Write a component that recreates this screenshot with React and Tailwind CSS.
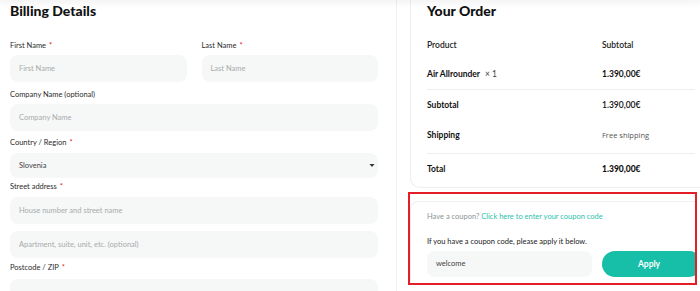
import { useState } from "react";

const Label = ({ children, required, className = "" }) => (
    <p className={`text-[7.5px] leading-[12px] text-[#2b2b2b] ${className}`}>
        {children}
        {required && <span className="text-[#e0261b] ml-[3px]">*</span>}
    </p>
)

const Field = ({ placeholder, value, className = "" }) => (
    <div className={`h-[27px] rounded-[8px] bg-[#f6f7f7] flex items-center px-[9px] text-[7.5px] ${value ? 'text-[#333]' : 'text-[#a8acac]'} ${className}`}>
        {value || placeholder}
    </div>
)

const orderRows = [
    { label: "Subtotal", value: "1.390,00€" },
]

const App = () => {
    const [coupon] = useState("welcome")

    return (
        <div className="w-[700px] h-[291px] overflow-hidden bg-white font-['Lato',sans-serif]">
            {/* header shadow from the sticky nav above */}
            <div className="h-0 relative z-10 shadow-[0_0_7px_2px_rgba(0,0,0,0.09)]" />

            <div className="flex">
                {/* Billing */}
                <div className="w-[397px] shrink-0 border-r border-[#f0f0f0] pl-[10px] pr-[18px] h-[300px]">
                    <h2 className="text-[14px] leading-[20px] font-black text-[#111] pt-[1px]">Billing Details</h2>

                    <div className="flex gap-[15px] mt-[19px]">
                        <div className="flex-1">
                            <Label required>First Name</Label>
                            <Field placeholder="First Name" className="mt-[3px]" />
                        </div>
                        <div className="flex-1">
                            <Label required>Last Name</Label>
                            <Field placeholder="Last Name" className="mt-[3px]" />
                        </div>
                    </div>

                    <Label className="mt-[7px]">Company Name (optional)</Label>
                    <Field placeholder="Company Name" className="mt-[3px]" />

                    <Label required className="mt-[6px]">Country / Region</Label>
                    <div className="mt-[4px] h-[25px] rounded-[8px] bg-[#f6f7f7] flex items-center justify-between pl-[9px] pr-[2px] text-[7.5px] text-[#444]">
                        <span>Slovenia</span>
                        <svg width="8" height="5" viewBox="0 0 8 5"><path d="M1.5 1h5L4 4z" fill="#333" /></svg>
                    </div>

                    <Label required className="mt-[3px]">Street address</Label>
                    <Field placeholder="House number and street name" className="mt-[4px]" />
                    <Field placeholder="Apartment, suite, unit, etc. (optional)" className="mt-[7px]" />

                    <Label required className="mt-[4px]">Postcode / ZIP</Label>
                    <Field placeholder="" className="mt-[5px]" />
                </div>

                {/* Order */}
                <div className="flex-1">
                    <div className="ml-[13px] w-[290px] border-l border-b border-[#eeeeee] rounded-bl-[10px] pl-[16px] pr-[5px] pt-[1px] pb-[2px]">
                        <h2 className="text-[14px] leading-[20px] font-black text-[#111]">Your Order</h2>

                        <div className="grid grid-cols-[175px_1fr] h-[30px] items-center mt-[9px] text-[8.5px] font-semibold text-[#222]">
                            <span>Product</span>
                            <span>Subtotal</span>
                        </div>
                        <div className="grid grid-cols-[175px_1fr] h-[30px] items-center border-b border-[#eeeeee] text-[8.5px] font-bold text-[#111]">
                            <span>Air Allrounder <span className="font-normal text-[#444] ml-[3px]">× 1</span></span>
                            <span>1.390,00€</span>
                        </div>
                        {orderRows.map(row => (
                            <div key={row.label} className="grid grid-cols-[175px_1fr] h-[31px] items-center text-[8.5px] text-[#111]">
                                <span className="font-bold">{row.label}</span>
                                <span className="font-semibold">{row.value}</span>
                            </div>
                        ))}
                        <div className="grid grid-cols-[175px_1fr] h-[33px] pb-[3px] items-center border-b border-[#eeeeee] text-[8.5px]">
                            <span className="font-bold text-[#111]">Shipping</span>
                            <span className="text-[7.5px] text-[#555] font-['Open_Sans',sans-serif]">Free shipping</span>
                        </div>
                        <div className="grid grid-cols-[175px_1fr] h-[31px] items-center text-[8.5px] font-bold text-[#111]">
                            <span>Total</span>
                            <span className="font-black">1.390,00€</span>
                        </div>
                    </div>

                    {/* Coupon */}
                    <div className="ml-[11px] mt-[4px] w-[289px] h-[93px] border-2 border-[#e41e26] overflow-hidden pt-[7px]">
                        <div className="h-full border-l border-t border-[#efefef] rounded-tl-[8px] pl-[16px] pt-[9px]">
                            <p className="text-[7.5px] leading-[12px] text-[#8c9292]">
                                Have a coupon? <span className="text-[#2dbfae]">Click here to enter your coupon code</span>
                            </p>
                            <p className="text-[7.5px] leading-[12px] text-[#222] mt-[13px]">If you have a coupon code, please apply it below.</p>
                            <div className="flex gap-[10px] mt-[3px]">
                                <div className="w-[165px] h-[26px] shrink-0 rounded-[8px] bg-[#f6f7f7] flex items-center pl-[9px] text-[7.5px] text-[#444]">
                                    {coupon}
                                </div>
                                <button className="w-[100px] h-[26px] shrink-0 rounded-full bg-[#17bea8] text-white text-[8.5px] font-bold pr-[6px]">
                                    Apply
                                </button>
                            </div>
                        </div>
                    </div>
                </div>
            </div>
        </div>
    )
}

export default App
